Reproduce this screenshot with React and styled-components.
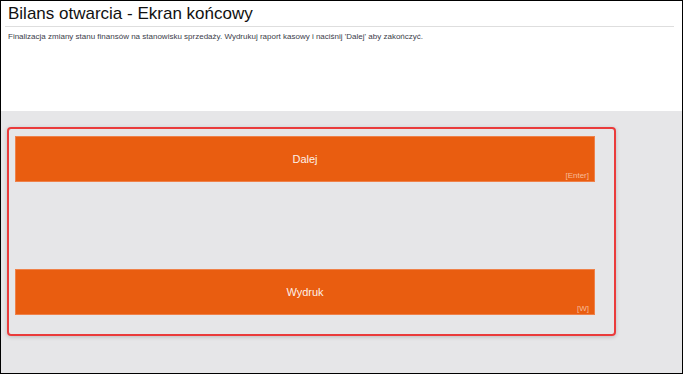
import React from "react";
import styled, { createGlobalStyle } from "styled-components";

const GlobalStyle = createGlobalStyle`
  html, body {
    margin: 0;
    padding: 0;
    background: #ffffff;
  }
  body {
    font-family: "Liberation Sans", Arial, sans-serif;
  }
`;

const actions = [
  { label: "Dalej", shortcut: "[Enter]" },
  { label: "Wydruk", shortcut: "[W]" },
];

const App = () => {
  return (
    <>
      <GlobalStyle />
      <Frame>
        <Header>
          <Title>Bilans otwarcia - Ekran końcowy</Title>
          <Rule />
          <Description>
            Finalizacja zmiany stanu finansów na stanowisku sprzedaży. Wydrukuj raport kasowy i
            naciśnij 'Dalej' aby zakończyć.
          </Description>
        </Header>
        <Content>
          <Panel>
            {actions.map((action) => (
              <ActionButton key={action.label}>
                {action.label}
                <Shortcut>{action.shortcut}</Shortcut>
              </ActionButton>
            ))}
          </Panel>
        </Content>
      </Frame>
    </>
  );
};

export default App;

const Frame = styled.div`
  width: 683px;
  height: 374px;
  box-sizing: border-box;
  border: 1px solid #000;
  display: flex;
  flex-direction: column;
  overflow: hidden;
`;

const Header = styled.div`
  height: 110px;
  background: #fff;
  padding: 2px 8px 0 4px;
  box-sizing: border-box;
`;

const Title = styled.h1`
  margin: 0 0 0 3px;
  font-size: 17px;
  font-weight: normal;
  line-height: 22px;
  color: #111;
`;

const Rule = styled.div`
  height: 1px;
  background: #dedede;
  margin-top: 1px;
`;

const Description = styled.p`
  margin: 5px 0 0 3px;
  font-size: 8px;
  line-height: 10px;
  color: #3b3d4a;
`;

const Content = styled.div`
  flex: 1;
  background: #e6e6e8;
  padding: 16px 0 0 6px;
`;

const Panel = styled.div`
  width: 609px;
  height: 209px;
  box-sizing: border-box;
  border: 2px solid #ea3b3b;
  border-radius: 4px;
  box-shadow: 0 1px 4px rgba(0, 0, 0, 0.18);
  padding: 7px 0 0 6px;
  display: flex;
  flex-direction: column;
  gap: 87px;
`;

const ActionButton = styled.div`
  position: relative;
  width: 580px;
  height: 46px;
  box-sizing: border-box;
  background: #e95d10;
  border: 1px solid #ef8149;
  color: #fdf0e8;
  font-size: 11px;
  display: flex;
  align-items: center;
  justify-content: center;
`;

const Shortcut = styled.span`
  position: absolute;
  right: 5px;
  bottom: 1px;
  font-size: 8px;
  color: #f8bc98;
`;
